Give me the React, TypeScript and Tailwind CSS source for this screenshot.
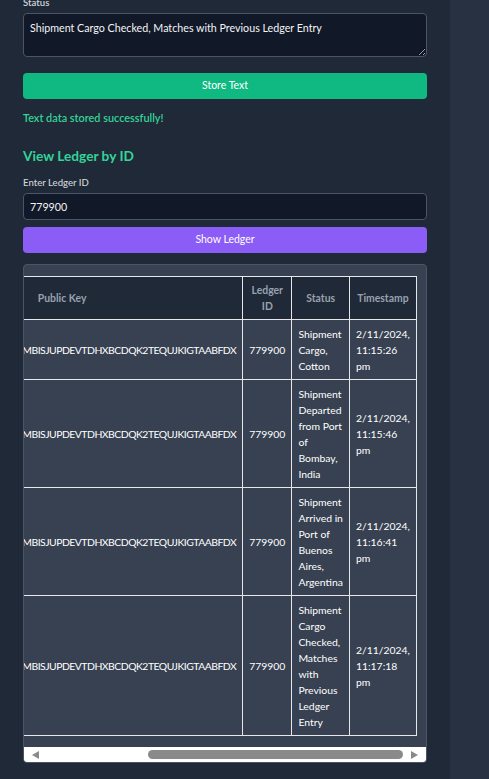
import { useEffect, useRef } from "react";

const KEY = "GDKQ3NZ7OYLRXW5HFAP2EMBISJUPDEVTDHXBCDQK2TEQUJKIGTAABFDX";

const rows = [
  { status: "Shipment Cargo, Cotton", ts: "2/11/2024, 11:15:26 pm" },
  { status: "Shipment Departed from Port of Bombay, India", ts: "2/11/2024, 11:15:46 pm" },
  { status: "Shipment Arrived in Port of Buenos Aires, Argentina", ts: "2/11/2024, 11:16:41 pm" },
  { status: "Shipment Cargo Checked, Matches with Previous Ledger Entry", ts: "2/11/2024, 11:17:18 pm" },
];

export default function App() {
  const ref = useRef<HTMLDivElement>(null);
  useEffect(() => {
    if (ref.current) ref.current.scrollLeft = ref.current.scrollWidth;
  }, []);

  return (
    <div className="flex min-h-[779px] overflow-hidden bg-[#283142] [font-family:'Segoe_UI',Lato,sans-serif]">
      <div className="w-[450px] shrink-0 bg-[#1f2937] px-[23px] pb-[18px]">
        <label className="-mt-[4px] mb-[3px] block text-[9.6px] font-semibold leading-[14px] text-gray-300">
          Status
        </label>
        <textarea
          defaultValue="Shipment Cargo Checked, Matches with Previous Ledger Entry"
          className="block h-[44px] w-full rounded-[4px] border border-gray-600 bg-[#111827] px-[6px] py-[6px] text-[10.7px] leading-[16px] text-gray-100 outline-none"
        />
        <button className="mt-[16px] block h-[26px] w-full rounded-[4px] bg-[#10b981] text-[10.5px] text-white">
          Store Text
        </button>
        <p className="mt-[11px] text-[10.9px] font-semibold leading-[16px] text-[#34d399]">
          Text data stored successfully!
        </p>
        <h2 className="mt-[20px] text-[13.7px] font-bold leading-[20px] text-[#34d399]">
          View Ledger by ID
        </h2>
        <label className="mt-[10px] block text-[9.6px] font-medium leading-[14px] text-gray-300">
          Enter Ledger ID
        </label>
        <input
          readOnly
          value="779900"
          className="mt-[3px] block h-[27px] w-full rounded-[4px] border border-gray-600 bg-[#111827] px-[6px] text-[10.7px] text-gray-100 outline-none"
        />
        <button className="mt-[7px] block h-[26px] w-full rounded-[4px] bg-[#8b5cf6] text-[10.5px] text-white">
          Show Ledger
        </button>
        <div className="mt-[11px] overflow-hidden rounded-[4px] border border-gray-600 bg-[#374151]">
          <div
            ref={ref}
            className="overflow-x-auto py-[11px] pl-[11px] pr-[9px] [scrollbar-width:none]"
          >
            <table className="border-collapse border border-gray-200 text-[10.4px] leading-[16px] text-white">
              <thead>
                <tr className="bg-[#1f2937] text-gray-400">
                  <th className="border border-gray-200 px-[6px] py-[5px]">Public Key</th>
                  <th className="border border-gray-200 px-[6px] py-[5px]">Ledger ID</th>
                  <th className="border border-gray-200 px-[6px] py-[5px]">Status</th>
                  <th className="border border-gray-200 px-[6px] py-[5px]">Timestamp</th>
                </tr>
              </thead>
              <tbody>
                {rows.map((r, i) => (
                  <tr key={i}>
                    <td className="border border-gray-200 px-[6px] py-[5.5px] tracking-[-0.5px]">{KEY}</td>
                    <td className="border border-gray-200 px-[6px] py-[5.5px]">779900</td>
                    <td className="border border-gray-200 px-[6px] py-[5.5px]">{r.status}</td>
                    <td className="border border-gray-200 px-[6px] py-[5.5px]">{r.ts}</td>
                  </tr>
                ))}
              </tbody>
            </table>
          </div>
          <div className="flex h-[15px] items-center bg-white">
            <div className="flex w-[19px] shrink-0 items-center pl-[8px]">
              <svg width="7" height="8" viewBox="0 0 7 8">
                <polygon points="0,4 7,0 7,8" fill="#8a8a8a" />
              </svg>
            </div>
            <div className="flex flex-1 justify-end pr-[4px]">
              <div className="h-[9px] w-[255px] rounded-full bg-[#8a8a8a]" />
            </div>
            <div className="flex w-[19px] shrink-0 items-center pl-[4px]">
              <svg width="7" height="8" viewBox="0 0 7 8">
                <polygon points="0,0 7,4 0,8" fill="#8a8a8a" />
              </svg>
            </div>
          </div>
        </div>
      </div>
    </div>
  );
}
